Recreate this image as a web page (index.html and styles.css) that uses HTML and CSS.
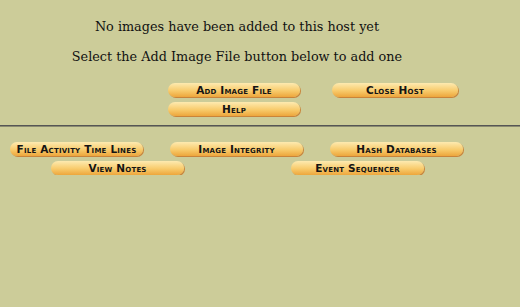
FILE: index.html
```html
<!DOCTYPE html>
<html lang="en">
<head>
  <meta charset="UTF-8">
  <title>Host Gallery</title>
  <link rel="stylesheet" href="styles.css">
</head>
<body>

  <div class="msg">
    <p>No images have been added to this host yet</p>
    <p>Select the Add Image File button below to add one</p>
  </div>

  <div class="top-btns">
    <a class="btn" href="#">Add Image File</a>
    <a class="btn" href="#">Close Host</a>
    <a class="btn" href="#">Help</a>
  </div>

  <hr>

  <div class="tools">
    <div class="row row1">
      <a class="btn" href="#">File Activity Time Lines</a>
      <a class="btn" href="#">Image Integrity</a>
      <a class="btn" href="#">Hash Databases</a>
    </div>
    <div class="row row2">
      <a class="btn" href="#">View Notes</a>
      <a class="btn" href="#">Event Sequencer</a>
    </div>
  </div>

</body>
</html>
```

FILE: styles.css
```css
body {
  background: #cccc99;
  color: #111;
  font-family: 'DejaVu Serif', serif;
  margin: 0;
}

.msg {
  width: 474px;
  text-align: center;
  padding-top: 18px;
}

.msg p {
  margin: 0 0 12px;
  font-size: 12.8px;
  line-height: 18px;
}

.top-btns {
  display: grid;
  grid-template-columns: 132px 126px;
  column-gap: 32px;
  row-gap: 5px;
  margin: 17px 0 0 168px;
}

.btn {
  display: block;
  height: 14px;
  line-height: 14px;
  border-radius: 7px;
  background: linear-gradient(#fdeab0, #f8cb6c 55%, #eda63c);
  box-shadow: 1px 1px 0 #c9843a;
  color: #141414;
  text-align: center;
  text-decoration: none;
  font-family: 'DejaVu Sans', sans-serif;
  font-weight: bold;
  font-size: 10.5px;
  font-variant: small-caps;
  letter-spacing: 0.2px;
  white-space: nowrap;
}

hr {
  margin: 9px 0 0;
  border: none;
  border-top: 1px solid #555;
  border-bottom: 1px solid #8a8a70;
}

.tools {
  padding-top: 15px;
}

.row {
  display: flex;
}

.row .btn {
  width: 133px;
}

.row1 {
  margin-left: 10px;
  gap: 27px;
}

.row2 {
  margin: 5px 0 0 51px;
  gap: 107px;
}
```
